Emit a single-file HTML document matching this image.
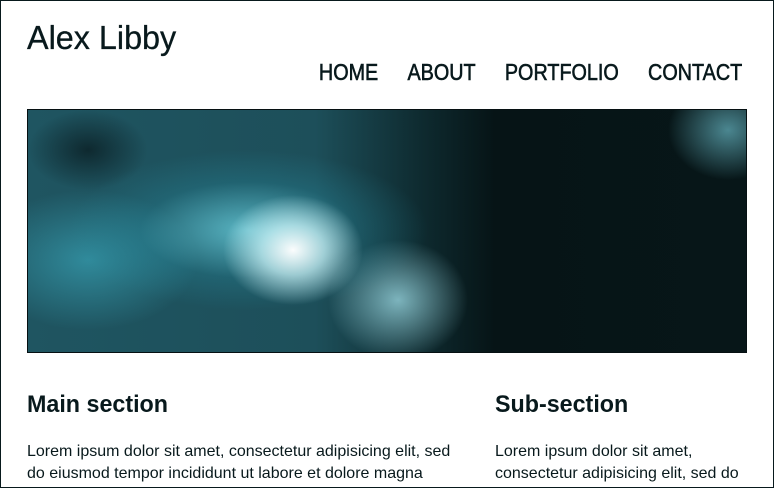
<!DOCTYPE html>
<html><head><style>
html,body{margin:0;padding:0}
body{width:774px;height:488px;overflow:hidden;background:#fff;font-family:"Liberation Sans",sans-serif;color:#08191c;position:relative}
.frame{position:absolute;left:0;top:0;width:772px;height:486px;border:1px solid #08191c}
h1{position:absolute;left:27px;top:19px;margin:0;font-size:33px;font-weight:normal;transform:scaleX(0.98);transform-origin:left;-webkit-text-stroke:0.3px #08191c}
nav{position:absolute;right:32px;top:59px;font-size:23px;transform:scaleX(0.86);transform-origin:right;white-space:nowrap;-webkit-text-stroke:0.6px #08191c}
nav span{margin-left:34px}
.hero{position:absolute;left:27px;top:109px;width:718px;height:242px;border:1px solid #061012;
background:
radial-gradient(ellipse 70px 55px at 265px 140px,rgba(255,255,255,.98),rgba(210,248,252,.7) 45%,rgba(0,0,0,0) 100%),
radial-gradient(ellipse 180px 80px at 220px 120px,rgba(110,215,230,.75),rgba(40,140,160,.3) 60%,rgba(0,0,0,0) 100%),
radial-gradient(ellipse 110px 70px at 60px 150px,rgba(60,175,195,.6),rgba(0,0,0,0) 100%),
radial-gradient(ellipse 70px 60px at 370px 190px,rgba(170,235,245,.7),rgba(0,0,0,0) 100%),
radial-gradient(ellipse 60px 40px at 60px 40px,rgba(10,30,35,.8),rgba(0,0,0,0) 100%),
radial-gradient(ellipse 60px 50px at 700px 20px,rgba(120,210,225,.6),rgba(0,0,0,0) 100%),
linear-gradient(90deg,#1f5561 0%,#1d4f5a 40%,#0e2a2f 55%,#061416 65%,#071618 100%);}
h2{position:absolute;margin:0;font-size:24px;font-weight:bold;top:391px;transform:scaleX(0.97);transform-origin:left}
p{position:absolute;margin:0;font-size:16px;line-height:22px;top:441px}
</style></head><body>
<div class="frame"></div>
<h1>Alex Libby</h1>
<nav><span>HOME</span><span>ABOUT</span><span>PORTFOLIO</span><span>CONTACT</span></nav>
<div class="hero"></div>
<h2 style="left:27px">Main section</h2>
<h2 style="left:495px">Sub-section</h2>
<p style="left:27px;width:440px">Lorem ipsum dolor sit amet, consectetur adipisicing elit, sed do eiusmod tempor incididunt ut labore et dolore magna</p>
<p style="left:495px;width:255px">Lorem ipsum dolor sit amet, consectetur adipisicing elit, sed do</p>
</body></html>
